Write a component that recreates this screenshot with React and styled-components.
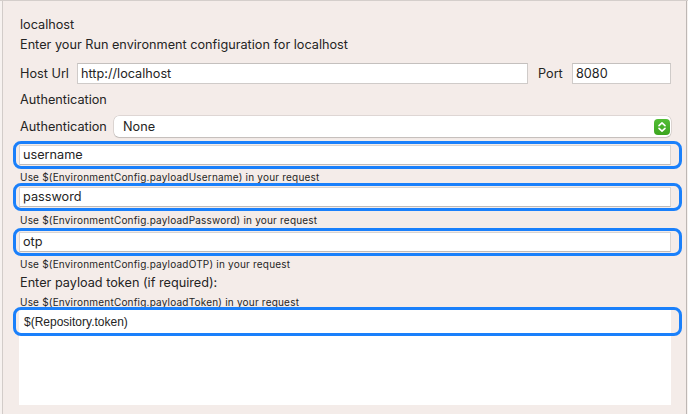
import React from "react";
import styled, { createGlobalStyle } from "styled-components";

const Global = createGlobalStyle`
  html, body { margin: 0; padding: 0; }
  body {
    background: #f7f2f0;
    font-family: Inter, "Liberation Sans", Arial, sans-serif;
    color: #242424;
  }
  * { box-sizing: border-box; }
`;

const Window = styled.div`
  width: 688px;
  height: 414px;
  border-top: 1px solid #d4cecb;
  display: flex;
  overflow: hidden;
`;

const Panel = styled.div`
  margin-left: 2px;
  width: 685px;
  height: 100%;
  background: #f4ece9;
  border-left: 1px solid #d2ccc9;
  border-right: 1px solid #bdb7b4;
  padding: 16px 15px 0 17px;
  display: flex;
  flex-direction: column;
`;

const Text = styled.div`
  font-size: 12.7px;
  line-height: 16px;
  margin-top: ${(p) => p.$mt || 0}px;
  white-space: nowrap;
`;

const Caption = styled.div`
  font-size: 10px;
  line-height: 12px;
  letter-spacing: 0.2px;
  color: #262626;
  margin-top: ${(p) => p.$mt || 0}px;
  white-space: nowrap;
`;

const Row = styled.div`
  display: flex;
  align-items: center;
  height: 21px;
  margin-top: ${(p) => p.$mt || 0}px;
`;

const Label = styled.div`
  font-size: 12.7px;
  line-height: 16px;
  width: ${(p) => p.$w}px;
  margin-left: ${(p) => p.$ml || 0}px;
  flex: none;
  white-space: nowrap;
`;

const TextInput = styled.div`
  height: 21px;
  background: #fff;
  border: 1px solid #cfcbc9;
  border-top-color: #c4c0be;
  font-size: 12.7px;
  line-height: 19px;
  padding-left: 3px;
  flex: ${(p) => (p.$w ? "none" : "1")};
  width: ${(p) => (p.$w ? `${p.$w}px` : "auto")};
  white-space: nowrap;
`;

const Select = styled.div`
  flex: 1;
  height: 21px;
  background: #fff;
  border-radius: 5px;
  box-shadow: 0 0 0 0.5px rgba(0, 0, 0, 0.18), 0 1px 1px rgba(0, 0, 0, 0.12);
  display: flex;
  align-items: center;
  justify-content: space-between;
  padding: 0 1px 0 9px;
  font-size: 12.7px;
`;

const Stepper = styled.svg`
  width: 16px;
  height: 16px;
  display: block;
`;

const Ring = styled.div`
  margin: ${(p) => p.$mt || 0}px -11px 0 -7px;
  border: 3px solid #1a80fb;
  border-radius: 8px;
  padding: 1px 8px 1px 3px;
`;

const Field = styled.div`
  height: 20px;
  background: #fff;
  border: 1px solid #d9d5d3;
  border-bottom-color: #bfbbb9;
  font-size: 12.7px;
  line-height: 18px;
  padding-left: 3px;
`;

const TokenWrap = styled.div`
  position: relative;
  margin: -1px 0 0 -1px;
  height: 98px;
`;

const TokenBox = styled.div`
  margin-top: 2px;
  height: 96px;
  background: #fff;
  font-family: "Liberation Sans", Arial, sans-serif;
  font-size: 12px;
  line-height: 16px;
  padding: 5px 0 0 5px;
`;

const TokenRing = styled.div`
  position: absolute;
  left: -6px;
  right: -11px;
  top: 0;
  height: 29px;
  border: 3px solid #1a80fb;
  border-radius: 8px;
  pointer-events: none;
`;

function UpDown() {
  return (
    <Stepper viewBox="0 0 16 16">
      <defs>
        <linearGradient id="g" x1="0" y1="0" x2="0" y2="1">
          <stop offset="0" stopColor="#52bd35" />
          <stop offset="1" stopColor="#3ca51f" />
        </linearGradient>
      </defs>
      <rect x="0" y="0" width="16" height="16" rx="4" fill="url(#g)" />
      <path d="M5 6.6 L8 3.8 L11 6.6" fill="none" stroke="#fff" strokeWidth="1.6" strokeLinecap="round" strokeLinejoin="round" />
      <path d="M5 9.4 L8 12.2 L11 9.4" fill="none" stroke="#fff" strokeWidth="1.6" strokeLinecap="round" strokeLinejoin="round" />
    </Stepper>
  );
}

export default function App() {
  return (
    <>
      <Global />
      <Window>
        <Panel>
          <Text>localhost</Text>
          <Text $mt={4}>Enter your Run environment configuration for localhost</Text>
          <Row $mt={10}>
            <Label $w={57}>Host Url</Label>
            <TextInput>http://localhost</TextInput>
            <Label $w={34} $ml={10}>Port</Label>
            <TextInput $w={99}>8080</TextInput>
          </Row>
          <Text $mt={8}>Authentication</Text>
          <Row $mt={8}>
            <Label $w={94}>Authentication</Label>
            <Select>
              <span>None</span>
              <UpDown />
            </Select>
          </Row>
          <Ring $mt={4}>
            <Field>username</Field>
          </Ring>
          <Caption $mt={2}>Use $(EnvironmentConfig.payloadUsername) in your request</Caption>
          <Ring $mt={0}>
            <Field>password</Field>
          </Ring>
          <Caption $mt={3}>Use $(EnvironmentConfig.payloadPassword) in your request</Caption>
          <Ring $mt={2}>
            <Field>otp</Field>
          </Ring>
          <Caption $mt={2}>Use $(EnvironmentConfig.payloadOTP) in your request</Caption>
          <Text $mt={5}>Enter payload token (if required):</Text>
          <Caption $mt={5}>Use $(EnvironmentConfig.payloadToken) in your request</Caption>
          <TokenWrap>
            <TokenBox>$(Repository.token)</TokenBox>
            <TokenRing />
          </TokenWrap>
        </Panel>
      </Window>
    </>
  );
}
